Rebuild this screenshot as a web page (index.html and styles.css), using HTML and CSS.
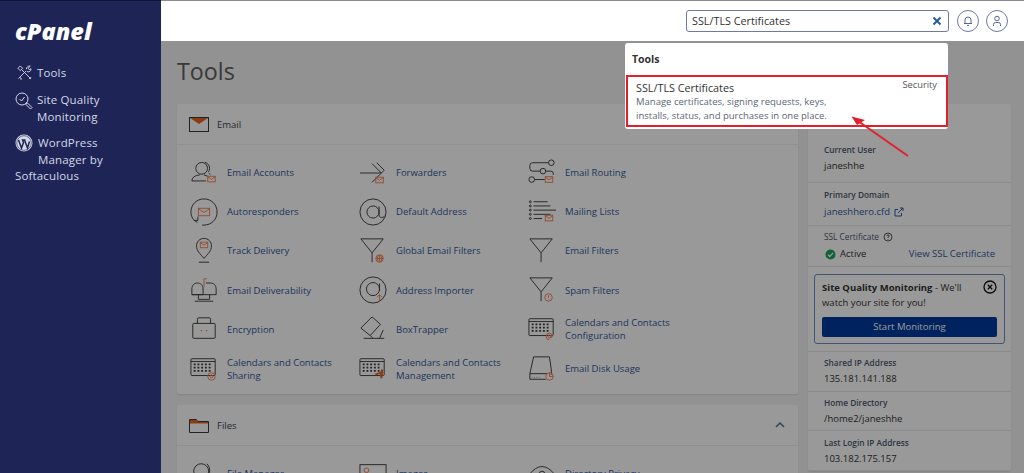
FILE: index.html
```html
<!DOCTYPE html>
<html lang="en">
<head>
    <meta charset="UTF-8">
    <title>cPanel - Tools</title>
    <link rel="stylesheet" href="styles.css">
</head>
<body>
    <!-- icon sprite -->
    <svg class="sprite" xmlns="http://www.w3.org/2000/svg">
        <symbol id="i-accounts" viewBox="0 0 30 30">
            <circle class="d" cx="12.500" cy="10" r="6.300"/>
            <path class="d" d="M16 3.500c3 .8 5 3.500 5 6.500 0 1.500-.5 2.800-1.200 3.800M2 23.500c0-3.500 3-5.500 6-6l2.500-.5M15 17l4 1.500M2 23.500h15M20 15l2 2"/>
            <rect class="o" x="19" y="18.500" width="8" height="6"/><path class="o" d="M19 19l4 2.800 4-2.800"/>
        </symbol>
        <symbol id="i-forward" viewBox="0 0 30 30">
            <path class="d" d="M1 15h23M14 5l10 10-10 10M19 4l8 8-3 3"/>
            <rect class="o" x="18" y="19.500" width="8" height="6"/><path class="o" d="M18 20l4 2.800 4-2.800"/>
        </symbol>
        <symbol id="i-routing" viewBox="0 0 30 30">
            <circle class="d" cx="25" cy="4" r="3"/><circle class="d" cx="16" cy="13" r="3"/><circle class="d" cx="4" cy="22" r="3"/>
            <path class="d" d="M22 4H5Q2 4 2 7v3q0 3 3 3h8M19 13h5q3 0 3 2v2M7 22h11"/>
            <rect class="o" x="18.500" y="19" width="8" height="6"/><path class="o" d="M18.500 19.500l4 2.800 4-2.800"/>
        </symbol>
        <symbol id="i-auto" viewBox="0 0 30 30">
            <path class="d" d="M8 26C3 24 1 19.500 1 15 1 7 7 1 15 1s14 6 14 14-6 14-14 14h-2M4 24h4.500v-4"/>
            <rect class="o" x="9" y="11" width="12" height="8"/><path class="o" d="M9 11.500l6 4 6-4"/>
        </symbol>
        <symbol id="i-at" viewBox="0 0 30 30">
            <circle class="d" cx="15" cy="15" r="14"/><circle class="d" cx="15" cy="15" r="6.500"/>
            <path class="d" d="M21.500 9v9c0 3.500 4.500 4 6 1"/>
        </symbol>
        <symbol id="i-list" viewBox="0 0 30 30">
            <circle class="d" cx="2.500" cy="4" r="1"/><circle class="d" cx="2.500" cy="8.500" r="1"/><circle class="d" cx="2.500" cy="13" r="1"/><circle class="d" cx="2.500" cy="17.500" r="1"/><circle class="d" cx="2.500" cy="22" r="1"/>
            <path class="d" d="M6 4h15M6 8.500h18M6 13h24M6 17.500h18M6 22h9"/>
            <rect class="o" x="18.500" y="18.500" width="8" height="6"/><path class="o" d="M18.500 19l4 2.800 4-2.800"/>
        </symbol>
        <symbol id="i-track" viewBox="0 0 30 30">
            <path class="d" d="M15 23C11 18 7 15 7 9.500 7 5 10.500 1.500 15 1.500S23 5 23 9.500C23 15 19 18 15 23zM9.500 27h11"/>
            <rect class="o" x="11" y="5.500" width="8" height="6"/><path class="o" d="M11 6l4 2.800 4-2.800"/>
        </symbol>
        <symbol id="i-filter" viewBox="0 0 30 30">
            <path class="d" d="M2 2h24L14 17zM14 17v10"/>
        </symbol>
        <symbol id="i-filter-globe" viewBox="0 0 30 30">
            <path class="d" d="M2 2h24L14 17zM14 17v10"/>
            <circle class="o" cx="22" cy="23" r="4"/><path class="o" d="M18 23h8M22 19v8M20.500 19.500q-1.500 3.500 0 7M23.500 19.500q1.500 3.500 0 7"/>
        </symbol>
        <symbol id="i-filter-spam" viewBox="0 0 30 30">
            <path class="d" d="M2 2h24L14 17zM14 17v10"/>
            <circle class="o" cx="22" cy="23" r="4"/><path class="o" d="M22 20.500v3M22 25v.8"/>
        </symbol>
        <symbol id="i-deliver" viewBox="0 0 30 30">
            <path class="d" d="M2 14c0-4 2.500-6.500 6-6.500s6 2.500 6 6.500v6H2zM2 20h26v-6c0-4-2.500-6.500-6-6.500h-5M9 20v5h12v-5M5 27h20"/>
            <path class="o" d="M15 12V3h3"/>
        </symbol>
        <symbol id="i-at-up" viewBox="0 0 30 30">
            <circle class="d" cx="15" cy="15" r="14"/><circle class="d" cx="15" cy="14" r="7"/>
            <path class="d" d="M22 8v8"/>
            <path class="o" d="M22 28v-8M19.500 22.500L22 20l2.500 2.500"/>
        </symbol>
        <symbol id="i-encrypt" viewBox="0 0 30 30">
            <rect class="d" x="3" y="9" width="24" height="16" rx="1"/>
            <path class="d" d="M8 9V4.500Q8 3 9.500 3h11Q22 3 22 4.500V9"/>
            <path class="dots" d="M11.500 16h1.500v1.500h-1.500zM17 16h1.500v1.500H17z"/>
        </symbol>
        <symbol id="i-box" viewBox="0 0 30 30">
            <path class="d" d="M2 14L14 2l9 8-11 12zM5 25h22M22 25l4-9M12 22l3 3"/>
        </symbol>
        <symbol id="i-cal" viewBox="0 0 30 30">
            <rect class="d" x="1" y="4" width="26" height="18" rx="1"/>
            <path class="d" d="M1 7h26"/>
            <path class="grid" d="M4 10h19M4 13.500h19M4 17h19" stroke-dasharray="2 2"/>
        </symbol>
        <symbol id="i-cal-share" viewBox="0 0 30 30">
            <use href="#i-cal"/>
            <circle class="o" cx="23" cy="23" r="4"/><circle class="o" cx="23" cy="23" r="1.500"/>
        </symbol>
        <symbol id="i-cal-manage" viewBox="0 0 30 30">
            <use href="#i-cal"/>
            <path class="solid" d="M17 20l6-2 1-3 2 1-1 9h-2l-1-5-4 2z"/>
        </symbol>
        <symbol id="i-cal-config" viewBox="0 0 30 30">
            <use href="#i-cal"/>
            <circle class="o" cx="23" cy="23" r="1.500"/><path class="o" d="M24.500 21.500V24q1.500 .5 1.500-1 0-3-3-3.500-3.500 0-3.500 3.500 0 3.500 3.500 3.500"/>
        </symbol>
        <symbol id="i-disk" viewBox="0 0 30 30">
            <path class="d" d="M6 2h17l2 14v5M6 2L2 20v6h17M2 20h19M4.500 23.500v.5M7 23.500v.5M9.500 23.500v.5M12 23.500v.5"/>
            <circle class="o" cx="23" cy="23" r="4"/><path class="o" d="M23 19v4h4"/>
        </symbol>
        <symbol id="i-person" viewBox="0 0 30 30">
            <circle class="d" cx="12" cy="12" r="8"/><path class="d" d="M18 4q5 4 2 14"/>
        </symbol>
        <symbol id="i-image" viewBox="0 0 30 30">
            <rect class="d" x="1" y="5" width="28" height="20"/><circle class="o" cx="8" cy="11" r="2.500"/>
        </symbol>
        <symbol id="i-privacy" viewBox="0 0 30 30">
            <path class="d" d="M1 16Q15-2 29 16"/><circle class="d" cx="15" cy="15" r="3"/>
        </symbol>
    </svg>

    <div class="app">
        <aside class="sidebar">
            <div class="logo">cPanel</div>
            <nav class="side-nav">
                <a class="side-link side-link-tools">
                    <svg class="side-icon" viewBox="0 0 16 16"><path d="M5 5l10 10 M13 15l2-2M1.500 14.500L9.500 6.500M3 13l2 2-1.500 0M10 4.500c0-2 1.500-3.500 4-3.500l-2 2.500 1 1.500 2-1c0 2.500-2 4-4.500 3M1 3.500L3.500 1 6 3.500 3.500 6z"/></svg>
                    Tools
                </a>
                <a class="side-link">
                    <svg class="side-icon side-icon-q" viewBox="0 0 18 32" preserveAspectRatio="xMidYMin meet"><circle cx="7" cy="7" r="6"/><path d="M4.500 7l2 2 3-4M11 11l1.500 0 4.500 4.500-1.500 1.500-4.500-4.500z"/></svg>
                    Site Quality Monitoring
                </a>
                <a class="side-link">
                    <svg class="side-icon side-icon-wp" viewBox="0 0 18 30" preserveAspectRatio="xMidYMin meet"><circle class="wp-disc" cx="9" cy="9" r="8.500"/><circle class="wp-ring" cx="9" cy="9" r="7.300"/><path class="wp-w" d="M3.500 6l3 8 2-5.500L7.500 6h3l-1 0 3 8 2-6.500"/></svg>
                    WordPress Manager by Softaculous
                </a>
            </nav>
        </aside>

        <div class="main">
            <header class="topbar">
                <div class="search">
                    <span class="search-text">SSL/TLS Certificates</span>
                    <svg class="search-clear" viewBox="0 0 10 10"><path d="M1.500 1.500l7 7M8.500 1.500l-7 7"/></svg>
                </div>
                <a class="round-btn">
                    <svg viewBox="0 0 12 12"><path d="M3 8.500V5a3 3 0 0 1 6 0v3.500zM2 8.500h8M5 10.500h2"/></svg>
                </a>
                <a class="round-btn">
                    <svg viewBox="0 0 12 12"><circle cx="6" cy="3.500" r="2.300"/><path d="M2.500 11V9.500Q2.500 7.500 4.500 7.500h3q2 0 2 2V11"/></svg>
                </a>
            </header>

            <div class="content">
                <h1 class="page-title">Tools</h1>
                <div class="columns">
                    <div class="left-col">
                        <section class="panel">
                            <div class="panel-head">
                                <svg class="panel-icon" viewBox="0 0 20 15"><rect class="d" x=".5" y=".5" width="19" height="14"/><path class="solid" d="M1 1h18l-9 6z"/></svg>
                                Email
                            </div>
                            <div class="tool-grid">
                                <a class="tool"><svg><use href="#i-accounts"/></svg><span>Email Accounts</span></a>
                                <a class="tool"><svg><use href="#i-forward"/></svg><span>Forwarders</span></a>
                                <a class="tool"><svg><use href="#i-routing"/></svg><span>Email Routing</span></a>
                                <a class="tool"><svg><use href="#i-auto"/></svg><span>Autoresponders</span></a>
                                <a class="tool"><svg><use href="#i-at"/></svg><span>Default Address</span></a>
                                <a class="tool"><svg><use href="#i-list"/></svg><span>Mailing Lists</span></a>
                                <a class="tool"><svg><use href="#i-track"/></svg><span>Track Delivery</span></a>
                                <a class="tool"><svg><use href="#i-filter-globe"/></svg><span>Global Email Filters</span></a>
                                <a class="tool"><svg><use href="#i-filter"/></svg><span>Email Filters</span></a>
                                <a class="tool"><svg><use href="#i-deliver"/></svg><span>Email Deliverability</span></a>
                                <a class="tool"><svg><use href="#i-at-up"/></svg><span>Address Importer</span></a>
                                <a class="tool"><svg><use href="#i-filter-spam"/></svg><span>Spam Filters</span></a>
                                <a class="tool"><svg><use href="#i-encrypt"/></svg><span>Encryption</span></a>
                                <a class="tool"><svg><use href="#i-box"/></svg><span>BoxTrapper</span></a>
                                <a class="tool"><svg><use href="#i-cal-config"/></svg><span>Calendars and Contacts Configuration</span></a>
                                <a class="tool"><svg><use href="#i-cal-share"/></svg><span>Calendars and Contacts Sharing</span></a>
                                <a class="tool"><svg><use href="#i-cal-manage"/></svg><span>Calendars and Contacts Management</span></a>
                                <a class="tool"><svg><use href="#i-disk"/></svg><span>Email Disk Usage</span></a>
                            </div>
                        </section>
                        <section class="panel">
                            <div class="panel-head">
                                <svg class="panel-icon" viewBox="0 0 20 15"><path class="d" d="M.5 14.500V1.500h7l1 2h11v11z"/><path class="solid" d="M1 2h7l1 2h10v1.500H1z"/></svg>
                                Files
                                <svg class="chevron" viewBox="0 0 10 6"><path d="M1 5l4-4 4 4"/></svg>
                            </div>
                            <div class="tool-grid">
                                <a class="tool"><svg><use href="#i-person"/></svg><span>File Manager</span></a>
                                <a class="tool"><svg><use href="#i-image"/></svg><span>Images</span></a>
                                <a class="tool"><svg><use href="#i-privacy"/></svg><span>Directory Privacy</span></a>
                            </div>
                        </section>
                    </div>

                    <aside class="info">
                        <div class="info-row info-row-first">
                            <div class="info-label">Current User</div>
                            <div class="info-value">janeshhe</div>
                        </div>
                        <div class="info-row info-row-domain">
                            <div class="info-label">Primary Domain</div>
                            <div class="info-value">
                                <a class="info-link">janeshhero.cfd</a>
                                <svg class="ext" viewBox="0 0 10 10"><path d="M7.500 6v3h-6.500v-6.500h3M4 6l5-5M6 1h3v3"/></svg>
                            </div>
                        </div>
                        <div class="info-row info-row-ssl">
                            <div class="info-label info-label-plain">SSL Certificate
                                <svg class="help" viewBox="0 0 10 10"><circle cx="5" cy="5" r="4"/><path d="M3.800 4Q4 2.800 5 2.800 6.300 2.800 6.200 4 6 4.800 5 5.200V6M5 7v.6"/></svg>
                            </div>
                            <div class="ssl-line">
                                <svg class="check" viewBox="0 0 12 12"><circle cx="6" cy="6" r="5.500"/><path d="M3.200 6.200l2 2 3.600-4"/></svg>
                                <span class="ssl-active">Active</span>
                                <a class="info-link ssl-view">View SSL Certificate</a>
                            </div>
                        </div>
                        <div class="promo">
                            <svg class="promo-close" viewBox="0 0 14 14"><circle cx="7" cy="7" r="6"/><path d="M4.800 4.800l4.400 4.400M9.200 4.800l-4.400 4.400"/></svg>
                            <p class="promo-text"><b>Site Quality Monitoring</b> - We'll<br>watch your site for you!</p>
                            <a class="promo-btn">Start Monitoring</a>
                        </div>
                        <div class="info-row info-row-after">
                            <div class="info-label">Shared IP Address</div>
                            <div class="info-value">135.181.141.188</div>
                        </div>
                        <div class="info-row info-row-home">
                            <div class="info-label">Home Directory</div>
                            <div class="info-value">/home2/janeshhe</div>
                        </div>
                        <div class="info-row">
                            <div class="info-label">Last Login IP Address</div>
                            <div class="info-value">103.182.175.157</div>
                        </div>
                    </aside>
                </div>
                <!-- grey layer behind the search results -->
                <div class="dim"></div>
            </div>
        </div>

        <div class="top-line"></div>

        <div class="results">
            <div class="results-head">Tools</div>
            <a class="result">
                <span class="result-main">
                    <span class="result-title">SSL/TLS Certificates</span>
                    <span class="result-desc">Manage certificates, signing requests, keys, installs, status, and purchases in one place.</span>
                </span>
                <span class="result-cat">Security</span>
            </a>
        </div>

        <svg class="arrow" viewBox="0 0 1024 473">
            <path class="arrow-line" d="M908 156L858 121"/>
            <path class="arrow-head" d="M851.500 116.500l13.500 3.500-8 5z"/>
        </svg>
    </div>
</body>
</html>
```

FILE: styles.css
```css
*{
    padding: 0;
    margin: 0;
    box-sizing: border-box;
}
body{
    height: 100vh;
    overflow: hidden;
    font-family: "Open Sans", "Liberation Sans", sans-serif;
    background-color: #f4f4f4;
}
.sprite{
    position: absolute;
    width: 0;
    height: 0;
}
.d{
    fill: none;
    stroke: #3a3a3a;
    stroke-width: 1;
}
.o{
    fill: none;
    stroke: #f57f50;
    stroke-width: 1;
}
.grid{
    fill: none;
    stroke: #3a3a3a;
    stroke-width: 2;
}
.dots{
    fill: #f57f50;
}
.solid{
    fill: #e8651f;
}
.app{
    position: relative;
    display: flex;
    height: 100vh;
    overflow: hidden;
}

/* sidebar */
.sidebar{
    flex: none;
    width: 161px;
    padding: 20px 15px 0;
    background-color: #1e2556;
    color: #d4d8e6;
    font-size: 11.500px;
    line-height: 16.300px;
    letter-spacing: .15px;
}
.logo{
    font-weight: 800;
    font-style: italic;
    font-size: 23.500px;
    line-height: 22px;
    letter-spacing: 0;
    color: #fff;
}
.side-nav{
    display: flex;
    flex-direction: column;
    margin-top: 23px;
}
.side-link{
    display: block;
    margin-bottom: 10.500px;
}
.side-link-tools{
    margin-bottom: 11px;
}
.side-icon{
    float: left;
    width: 15px;
    height: 15px;
    margin: 0 5px 0 2px;
    fill: none;
    stroke: #d4d8e6;
    stroke-width: 1;
}
.side-icon-q{
    width: 18px;
    height: 32px;
    margin: 0 4px 0 0;
}
.side-icon-wp{
    width: 18px;
    height: 30px;
    margin: -1px 5px 0 0;
}
.wp-disc{
    fill: #d4d8e6;
    stroke: none;
}
.wp-ring{
    stroke: #1e2556;
    stroke-width: .6;
}
.wp-w{
    stroke: #1e2556;
    stroke-width: 1.500;
}

/* header */
.main{
    flex: 1;
    min-width: 0;
    display: flex;
    flex-direction: column;
}
.topbar{
    flex: none;
    height: 41px;
    display: flex;
    align-items: center;
    justify-content: flex-end;
    gap: 7px;
    padding-right: 16px;
    background-color: #fff;
}
.search{
    display: flex;
    align-items: center;
    justify-content: space-between;
    width: 263px;
    height: 22px;
    margin-right: 1px;
    padding: 0 6px 0 5px;
    border: 1px solid #6d7aa3;
    border-radius: 3px;
    font-size: 10.800px;
    color: #333;
}
.search-clear{
    width: 10px;
    height: 10px;
    fill: none;
    stroke: #2c5a9e;
    stroke-width: 2;
}
.round-btn{
    display: flex;
    align-items: center;
    justify-content: center;
    width: 22px;
    height: 22px;
    border: 1px solid #6d7aa3;
    border-radius: 50%;
}
.round-btn svg{
    width: 12px;
    height: 12px;
    fill: none;
    stroke: #5a668c;
    stroke-width: 1;
}

/* content */
.content{
    position: relative;
    flex: 1;
    min-height: 0;
    padding: 0 13px 0 16px;
}
.dim{
    position: absolute;
    inset: 0;
    background-color: rgba(0, 0, 0, .4);
}
.page-title{
    height: 63px;
    padding-top: 13px;
    font-size: 23.300px;
    line-height: 34px;
    font-weight: 400;
    color: #5f5f5f;
}
.columns{
    display: flex;
    gap: 10px;
    align-items: flex-start;
}
.left-col{
    flex: none;
    width: 621px;
    display: flex;
    flex-direction: column;
    gap: 11px;
}
.panel{
    background-color: #fff;
    border-radius: 3px;
    box-shadow: 0 1px 2px rgba(0, 0, 0, .1);
}
.panel-head{
    display: flex;
    align-items: center;
    gap: 8px;
    height: 41px;
    padding: 0 12px;
    border-bottom: 1px solid #eee;
    font-size: 9.500px;
    color: #3a4654;
}
.panel-icon{
    width: 20px;
    height: 15px;
}
.chevron{
    width: 10px;
    height: 6px;
    margin-left: auto;
    margin-right: 1px;
    fill: none;
    stroke: #5c6f8f;
    stroke-width: 1.500;
}
.tool-grid{
    display: grid;
    grid-template-columns: repeat(3, 169px);
    grid-auto-rows: 39.200px;
    padding: 8px 0 6px 13px;
}
.tool{
    display: flex;
    align-items: center;
    gap: 9px;
    font-size: 9.500px;
    line-height: 13px;
    color: #33589c;
}
.tool svg{
    flex: none;
    width: 28px;
    height: 28px;
}
.tool span{
    max-width: 125px;
}

/* right column */
.info{
    flex: none;
    width: 203px;
    padding-top: 36px;
    background-color: #fff;
    border-radius: 3px;
    box-shadow: 0 1px 2px rgba(0, 0, 0, .1);
}
.info-row{
    height: 40px;
    padding: 5px 16px 0;
    border-bottom: 1px solid #eaeaea;
}
.info-row-first{
    height: 43px;
    padding-top: 3px;
}
.info-row-domain{
    height: 43px;
}
.info-row-domain .info-value{
    margin-top: 3px;
}
.info-row-ssl{
    height: 41px;
    padding-top: 4px;
}
.info-row-after{
    height: 41px;
    padding-top: 4px;
    border-top: 1px solid #eaeaea;
    margin-top: 7px;
}
.info-row-home{
    height: 39px;
    padding-top: 4px;
}
.info-label{
    font-size: 8.300px;
    line-height: 14px;
    font-weight: 600;
    color: #4a5a6e;
}
.info-label-plain{
    font-weight: 400;
    display: flex;
    align-items: center;
    gap: 4px;
}
.info-value{
    display: flex;
    align-items: center;
    gap: 4px;
    margin-top: 2px;
    font-size: 9.500px;
    line-height: 14px;
    color: #333;
}
.info-link{
    color: #33589c;
}
.ext{
    width: 10px;
    height: 10px;
    fill: none;
    stroke: #33589c;
    stroke-width: 1;
}
.help{
    width: 10px;
    height: 10px;
    fill: none;
    stroke: #333;
    stroke-width: .8;
}
.ssl-line{
    display: flex;
    align-items: center;
    gap: 4px;
    margin: 3px 0 0 1px;
    font-size: 9.500px;
    line-height: 14px;
    color: #333;
}
.check{
    width: 11px;
    height: 11px;
    fill: #1fa35a;
    stroke: none;
}
.check path{
    fill: none;
    stroke: #fff;
    stroke-width: 1.300;
}
.ssl-view{
    margin-left: auto;
}
.promo{
    position: relative;
    margin: 7px 6px 0;
    height: 70px;
    padding: 6px 7px 0;
    border: 1px solid #6d8cc0;
    border-radius: 3px;
}
.promo-close{
    position: absolute;
    top: 5px;
    right: 7px;
    width: 14px;
    height: 14px;
    fill: none;
    stroke: #111;
    stroke-width: 1.300;
}
.promo-text{
    font-size: 9.500px;
    line-height: 14.500px;
    color: #333;
}
.promo-text b{
    font-weight: 700;
}
.promo-btn{
    display: block;
    height: 20px;
    margin-top: 7px;
    border-radius: 2px;
    background-color: #003a9e;
    color: #fff;
    font-size: 9.500px;
    line-height: 20px;
    text-align: center;
}

/* search results over the grey layer */
.top-line{
    position: absolute;
    top: 0;
    left: 0;
    right: 0;
    height: 1px;
    background-color: rgba(0, 0, 0, .45);
}
.results{
    position: absolute;
    top: 43px;
    left: 625px;
    width: 323px;
    height: 86px;
    background-color: #fff;
    border-radius: 3px;
}
.results-head{
    height: 32px;
    padding: 8px 7px 0;
    font-size: 10.500px;
    line-height: 16px;
    font-weight: 700;
    color: #333;
}
.result{
    display: flex;
    justify-content: space-between;
    height: 52px;
    margin-left: 1px;
    padding: 3px 9px 0 8px;
    border: 2px solid #e2202c;
}
.result-main{
    display: flex;
    flex-direction: column;
    width: 210px;
}
.result-title{
    font-size: 10.800px;
    line-height: 15px;
    color: #333;
}
.result-desc{
    font-size: 9.500px;
    line-height: 14px;
    color: #5b6675;
}
.result-cat{
    margin-top: -2px;
    font-size: 9.300px;
    line-height: 14px;
    color: #555;
}
.arrow{
    position: absolute;
    top: 0;
    left: 0;
    width: 1024px;
    height: 473px;
    pointer-events: none;
}
.arrow-line{
    fill: none;
    stroke: #e2202c;
    stroke-width: 2;
}
.arrow-head{
    fill: #e2202c;
}
```
